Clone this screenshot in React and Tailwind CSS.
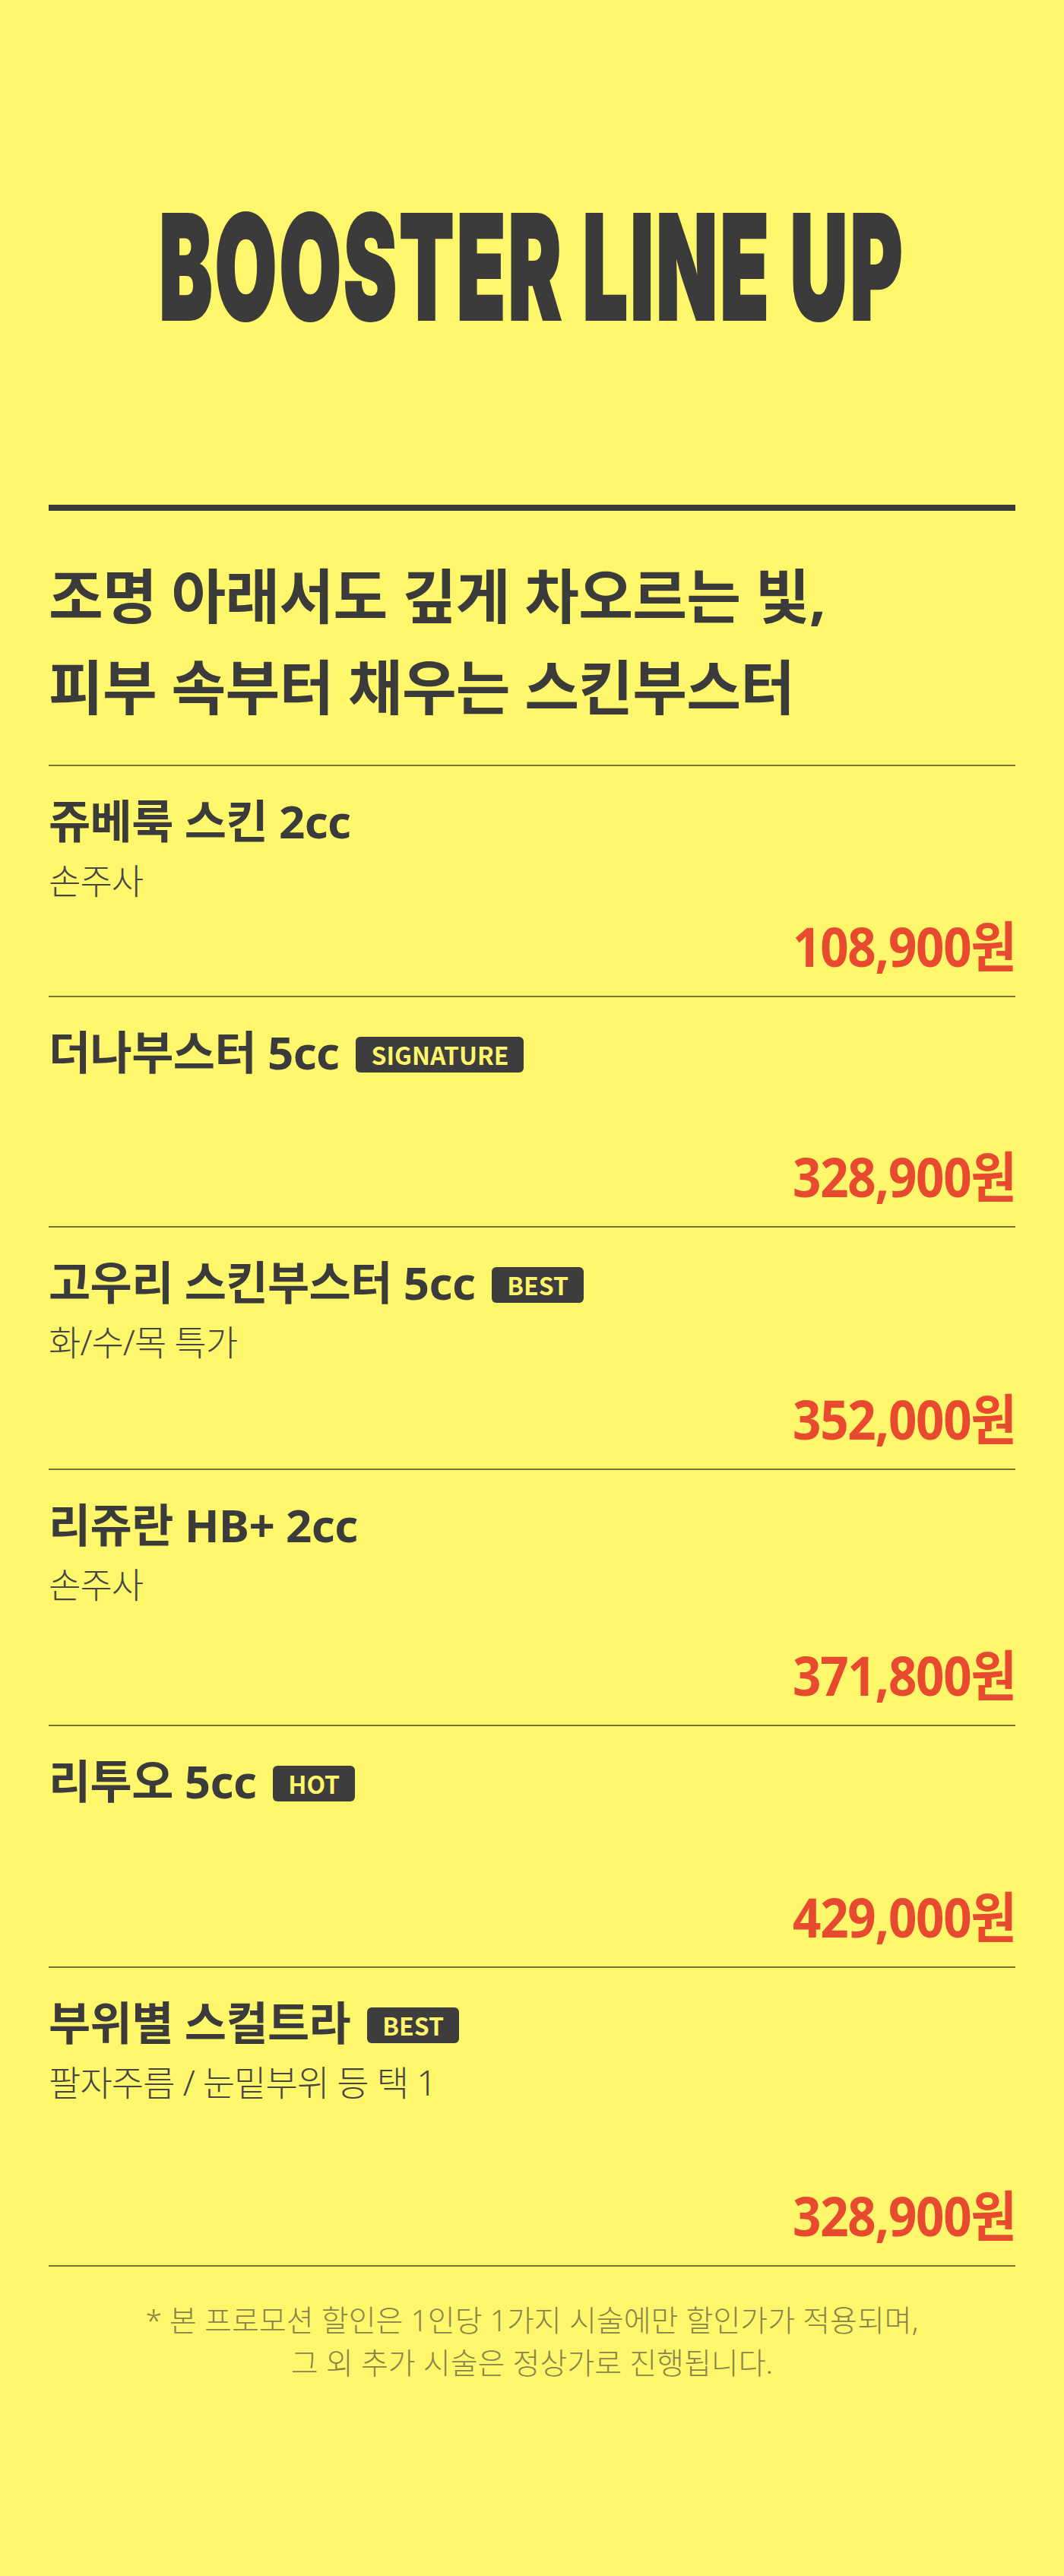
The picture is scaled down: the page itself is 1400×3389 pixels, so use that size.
const items = [
  { name: '쥬베룩 스킨 2cc', sub: '손주사', price: '108,900원', h: 'h-[304px]' },
  { name: '더나부스터 5cc', badge: 'SIGNATURE', price: '328,900원', h: 'h-[303px]' },
  { name: '고우리 스킨부스터 5cc', badge: 'BEST', sub: '화/수/목 특가', price: '352,000원', h: 'h-[319px]' },
  { name: '리쥬란 HB+ 2cc', sub: '손주사', price: '371,800원', h: 'h-[337px]' },
  { name: '리투오 5cc', badge: 'HOT', price: '429,000원', h: 'h-[318px]' },
  { name: '부위별 스컬트라', badge: 'BEST', sub: '팔자주름 / 눈밑부위 등 택 1', price: '328,900원', h: 'h-[393px]' },
]

const kr = 'font-["Noto_Sans","Noto_Sans_CJK_KR",sans-serif]'

function Item({ item }) {
  return (
    <div className={`${item.h} flex flex-col border-b-2 border-[#78732e] pt-[36px] pb-[26px]`}>
      <div className="flex items-center gap-[22px]">
        <h3 className={`${kr} text-[60px] leading-[72px] font-bold tracking-[-0.01em] text-[#3b3b3b]`}>{item.name}</h3>
        {item.badge && (
          <span className="mt-[6px] rounded-md bg-[#3d3d3d] px-[20px] h-[47px] flex items-center font-['Noto_Sans_CJK_KR',sans-serif] text-[32px] font-bold text-[#fff56b]">
            {item.badge}
          </span>
        )}
      </div>
      {item.sub && (
        <p className={`${kr} mt-[14px] text-[46px] leading-[56px] font-light tracking-[-0.02em] text-[#454545]`}>{item.sub}</p>
      )}
      <div className="mt-auto flex justify-end">
        <span className={`${kr} inline-block origin-right scale-x-[0.91] text-[72px] leading-[80px] font-bold tracking-[-0.02em] text-[#e84a30]`}>
          {item.price}
        </span>
      </div>
    </div>
  )
}

export default function App() {
  return (
    <div className="min-h-[3389px] bg-[#fef76b] overflow-hidden">
      <div className="px-[64px]">
        {/* Title */}
        <div className="pt-[256px] flex justify-center">
          <h1 className="inline-block scale-x-[0.55] whitespace-nowrap font-['Inter',sans-serif] text-[190px] leading-[190px] font-black tracking-[0.035em] text-[#3b3b3b] [-webkit-text-stroke:4px_#3b3b3b]">
            BOOSTER LINE UP
          </h1>
        </div>

        <div className="mt-[218px] h-[8px] bg-[#3b3b3b]" />

        <h2 className={`${kr} pt-[52px] pb-[42px] text-[78px] leading-[120px] font-bold tracking-[-0.01em] text-[#3b3b3b] border-b-2 border-[#78732e]`}>
          조명 아래서도 깊게 차오르는 빛,
          <br />
          피부 속부터 채우는 스킨부스터
        </h2>

        {items.map((item) => (
          <Item key={item.name + item.price} item={item} />
        ))}

        <p className={`${kr} pt-[42px] text-center text-[39px] leading-[56px] font-light text-[#88834a]`}>
          * 본 프로모션 할인은 1인당 1가지 시술에만 할인가가 적용되며,
          <br />
          그 외 추가 시술은 정상가로 진행됩니다.
        </p>
      </div>
    </div>
  )
}
